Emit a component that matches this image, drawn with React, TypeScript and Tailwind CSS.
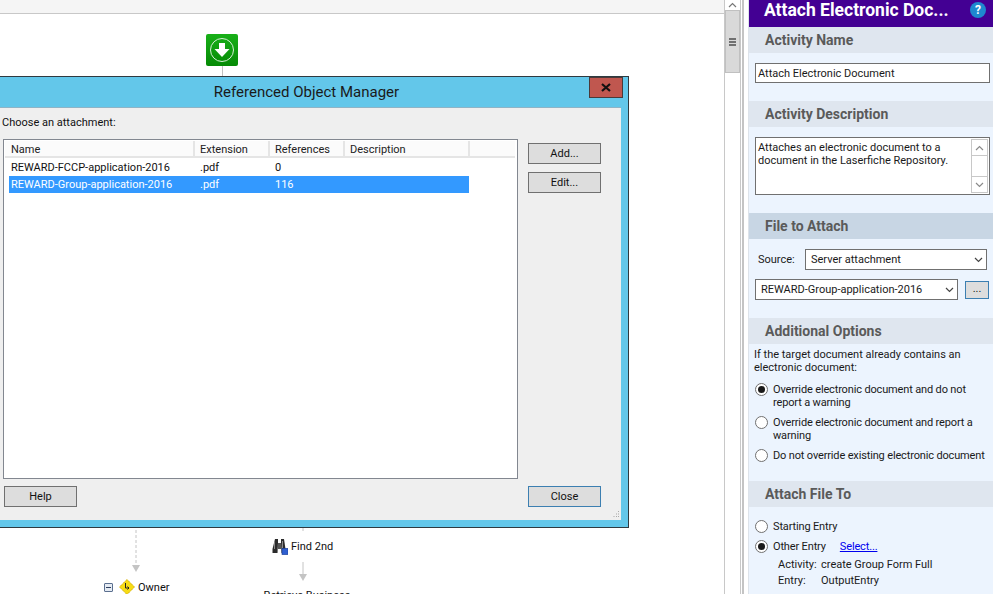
const font = { fontFamily: 'Roboto, "Noto Sans", sans-serif' };

function Chevron({ up = false, className = "" }: { up?: boolean; className?: string }) {
  return (
    <svg width="9" height="6" viewBox="0 0 9 6" className={className}>
      <path d={up ? "M1 5 L4.5 1.5 L8 5" : "M1 1 L4.5 4.5 L8 1"} fill="none" stroke="currentColor" strokeWidth="1.2" />
    </svg>
  );
}

function Btn({ label, active = false, className = "" }: { label: string; active?: boolean; className?: string }) {
  return (
    <div className={`flex h-[21px] w-[73px] items-center justify-center border-[1px] bg-[#dddddd] pt-[2px] text-[11px] text-[#111] ${active ? "border-[#3c7fb1]" : "border-[#707070]"} ${className}`}>
      {label}
    </div>
  );
}

function ColHead({ label, w }: { label: string; w: string }) {
  return <div className={`flex h-full shrink-0 items-center border-r-2 border-[#e5e5e5] pl-[5px] pt-[3px] ${w}`}>{label}</div>;
}

function Row({ a, b, c, selected = false }: { a: string; b: string; c: string; selected?: boolean }) {
  return (
    <div className={`flex h-[17px] w-[460px] items-center pl-[2px] pt-[1px] ${selected ? "bg-[#3399ff] text-white" : "text-[#111]"}`}>
      <span className="w-[189px] shrink-0">{a}</span>
      <span className="w-[75px] shrink-0">{b}</span>
      <span>{c}</span>
    </div>
  );
}

function Dialog() {
  return (
    <div className="absolute left-[-17px] top-[76px] flex h-[452px] w-[646px] flex-col border border-[#2f3a40] bg-[#63c7ea] pb-[7px] pl-[8px] pr-[7px]">
      <div className="flex h-[30px] shrink-0 items-center justify-center text-[15px] text-[#1a1a1a]">Referenced Object Manager</div>
      <div className="absolute right-[5px] top-0 flex h-[21px] w-[34px] items-center justify-center border border-[#4a3a3a] bg-[#c0574f]">
        <svg width="10" height="9" viewBox="0 0 10 9"><path d="M1 1 L9 8 M9 1 L1 8" stroke="#111" strokeWidth="2.2" /></svg>
      </div>
      <div className="flex min-h-0 flex-1 flex-col border-t border-[#8fb4c6] bg-[#efefef] pl-[10px] pr-[20px] text-[11px]">
        <div className="mt-[7px] h-[16px] leading-[16px] text-[#111]">Choose an attachment:</div>
        <div className="mt-[8px] flex min-h-0 flex-1 gap-[10px]">
          <div className="ml-[1px] w-[515px] shrink-0 border border-[#828790] bg-white p-[1px]">
            <div className="mb-[1px] flex h-[17px] w-[510px] items-start border-b-2 border-[#e5e5e5] bg-[#fbfbfb] text-[#222]">
              <ColHead label="Name" w="w-[190px] pl-[6px]" />
              <ColHead label="Extension" w="w-[75px]" />
              <ColHead label="References" w="w-[75px]" />
              <ColHead label="Description" w="w-[125px]" />
            </div>
            <div className="ml-[4px]">
              <Row a="REWARD-FCCP-application-2016" b=".pdf" c="0" />
              <Row a="REWARD-Group-application-2016" b=".pdf" c="116" selected />
            </div>
          </div>
          <div className="flex flex-col gap-[8px] pt-[4px]">
            <Btn label="Add..." />
            <Btn label="Edit..." />
          </div>
        </div>
        <div className="flex h-[41px] shrink-0 items-center justify-between pb-[6px] pl-[2px]">
          <Btn label="Help" />
          <Btn label="Close" active />
        </div>
      </div>
      <svg className="absolute bottom-[8px] right-[8px]" width="9" height="9" viewBox="0 0 9 9">
        <path d="M7 1h1v1H7zM5 3.500h1v1H5zM7 3.500h1v1H7zM2.500 6h1v1h-1zM5 6h1v1H5zM7 6h1v1H7z" fill="#a8a8a8" />
      </svg>
    </div>
  );
}

function Canvas() {
  return (
    <div className="relative min-w-0 flex-1 bg-white text-[11px] text-[#111]">
      <div className="h-[14px] border-b border-[#c8c8c8] bg-[#f5f5f5]" />
      <div className="absolute left-[206px] top-[34px] flex h-[32px] w-[32px] items-center justify-center rounded-[2px] bg-gradient-to-b from-[#18b018] to-[#058a05]">
        <svg width="26" height="26" viewBox="0 0 26 26">
          <circle cx="13" cy="13" r="11.500" fill="none" stroke="#d6efd6" strokeWidth="1" />
          <path d="M10 6h6v6h4.500L13 20 5.500 12H10z" fill="#fff" />
        </svg>
      </div>
      <div className="absolute left-[222px] top-[66px] h-[10px] w-px bg-[#c0c0c0]" />
      <Dialog />
      <svg className="absolute left-[130px] top-[528px]" width="12" height="45" viewBox="0 0 12 45">
        <path d="M6 2V38" stroke="#c4c4c4" strokeDasharray="3 2" />
        <path d="M2 37h8l-4 7z" fill="#c4c4c4" />
      </svg>
      <svg className="absolute left-[297px] top-[528px]" width="12" height="54" viewBox="0 0 12 54">
        <path d="M6 0V3M6 34V48" stroke="#c4c4c4" />
        <path d="M2 46h8l-4 7z" fill="#c4c4c4" />
      </svg>
      <div className="absolute left-[272px] top-[537px] flex items-center gap-[3px]">
        <svg width="16" height="17" viewBox="0 0 16 17">
          <path d="M3 1h3v4l-.5 10H0.500V11z" fill="#2b2b2b" />
          <path d="M9 1h3l1.500 10v4H9.500L9 5z" fill="#2b2b2b" />
          <rect x="6" y="5" width="3" height="6" fill="#555" />
          <rect x="2" y="3" width="1" height="8" fill="#8a8a8a" />
          <rect x="10" y="3" width="1" height="7" fill="#8a8a8a" />
          <rect x="10" y="10.500" width="6" height="6" fill="#2f5fd0" stroke="#1a3f9a" strokeWidth="0.7" />
        </svg>
        <span className="pt-[2px]">Find 2nd</span>
      </div>
      <div className="absolute left-[104px] top-[579px] flex items-center">
        <div className="flex h-[9px] w-[9px] items-center justify-center rounded-[1px] border border-[#5b6f8f] bg-[#e5ebf3]">
          <div className="h-px w-[5px] bg-[#2f3f5f]" />
        </div>
        <svg className="ml-[6px]" width="16" height="16" viewBox="0 0 16 16">
          <path d="M8 0.500l7.500 7.500-7.500 7.500L0.500 8z" fill="#f7dc14" stroke="#d0a800" strokeDasharray="1.500 0.700" />
          <path d="M6.500 4v5h3M8.500 7.500L10 9l-1.500 1.500" fill="none" stroke="#222" strokeWidth="1" />
        </svg>
        <span className="ml-[3px] pt-[1px] leading-[14px]">Owner</span>
      </div>
      <div className="absolute left-[258px] top-[589px] leading-[14px]">· Retrieve Business</div>
    </div>
  );
}

function Scrollbar() {
  return (
    <div className="flex w-[24px] shrink-0 bg-white">
      <div className="flex w-[17px] flex-col items-center border-x border-[#c8c8c8] bg-white">
        <div className="flex h-[10px] w-full items-center justify-center text-[#777]"><Chevron up /></div>
        <div className="flex h-[63px] w-full items-center justify-center border border-[#c0c0c0] bg-[#d9d9d9]">
          <div className="flex flex-col gap-[1px]">
            <div className="h-[2px] w-[7px] bg-[#707070]" />
            <div className="h-[2px] w-[7px] bg-[#707070]" />
            <div className="h-[2px] w-[7px] bg-[#707070]" />
          </div>
        </div>
      </div>
      <div className="ml-[1px] w-[2px] bg-[#c4c4c4]" />
    </div>
  );
}

function SectionHead({ label, active = false }: { label: string; active?: boolean }) {
  return (
    <div className={`flex h-[26px] shrink-0 items-center pl-[16px] pt-[1px] text-[14px] font-bold text-[#5a5a5a] ${active ? "bg-[#c8d6e4]" : "bg-[#dfe6ef]"}`}>
      {label}
    </div>
  );
}

function Radio({ on = false }: { on?: boolean }) {
  return (
    <div className="flex h-[13px] w-[13px] shrink-0 items-center justify-center rounded-full border border-[#707070] bg-white">
      {on && <div className="h-[7px] w-[7px] rounded-full bg-[#1a1a1a]" />}
    </div>
  );
}

function RadioRow({ on = false, children, className = "" }: { on?: boolean; children: React.ReactNode; className?: string }) {
  return (
    <div className={`flex items-start gap-[5px] whitespace-nowrap pl-[6px] leading-[13px] tracking-[-0.15px] ${className}`}>
      <Radio on={on} />
      <div>{children}</div>
    </div>
  );
}

function Select({ label, className = "" }: { label: string; className?: string }) {
  return (
    <div className={`flex h-[21px] items-center justify-between whitespace-nowrap border border-[#707070] bg-white pl-[5px] pr-[3px] ${className}`}>
      <span>{label}</span>
      <Chevron className="text-[#444]" />
    </div>
  );
}

function Panel() {
  return (
    <div className="flex w-[245px] shrink-0 flex-col overflow-hidden border-l border-[#dde3ea] bg-[#ecf4fe] text-[11px] leading-[13px] text-[#1a1a1a]">
      <div className="flex h-[27px] shrink-0 items-start justify-between bg-[#430093] pl-[15px] pr-[7px]">
        <span className="text-[17.5px] leading-[20px] font-bold text-white">Attach Electronic Doc...</span>
        <div className="mt-[2px] flex h-[16px] w-[16px] items-center justify-center rounded-full bg-[#1e88cf] text-[12px] font-bold text-white">?</div>
      </div>
      <SectionHead label="Activity Name" />
      <div className="h-[48px] shrink-0 pl-[6px] pr-[3px] pt-[10px]">
        <div className="flex h-[20px] items-center border border-[#707070] bg-white pl-[2px]">Attach Electronic Document</div>
      </div>
      <SectionHead label="Activity Description" />
      <div className="h-[86px] shrink-0 pl-[6px] pr-[3px] pt-[10px]">
        <div className="flex h-[58px] justify-between border border-[#707070] bg-white">
          <div className="whitespace-nowrap pl-[2px] pt-[3px]">Attaches an electronic document to a<br />document in the Laserfiche Repository.</div>
          <div className="m-[1px] flex w-[17px] flex-col items-center justify-between border border-[#c8c8c8] bg-white text-[#8a8a8a]">
            <div className="flex h-[16px] w-full items-center justify-center border-b border-[#c8c8c8]"><Chevron up /></div>
            <div className="flex h-[16px] w-full items-center justify-center border-t border-[#c8c8c8]"><Chevron /></div>
          </div>
        </div>
      </div>
      <SectionHead label="File to Attach" active />
      <div className="h-[79px] shrink-0 pl-[6px] pr-[3px] pt-[10px]">
        <div className="flex items-center">
          <span className="ml-[3px] w-[47px]">Source:</span>
          <Select label="Server attachment" className="w-[182px]" />
        </div>
        <div className="mt-[9px] flex items-center gap-[7px]">
          <Select label="REWARD-Group-application-2016" className="w-[203px]" />
          <div className="flex h-[18px] w-[24px] items-center justify-center border border-[#3c7fb1] bg-[#dddddd] pb-[3px]">...</div>
        </div>
      </div>
      <SectionHead label="Additional Options" />
      <div className="h-[137px] shrink-0 pt-[4px]">
        <div className="whitespace-nowrap pl-[5px] leading-[13px]">If the target document already contains an<br />electronic document:</div>
        <RadioRow on className="mt-[9px]">Override electronic document and do not<br />report a warning</RadioRow>
        <RadioRow className="mt-[7px]">Override electronic document and report a<br />warning</RadioRow>
        <RadioRow className="mt-[7px]">Do not override existing electronic document</RadioRow>
      </div>
      <SectionHead label="Attach File To" />
      <div className="pt-[13px]">
        <RadioRow>Starting Entry</RadioRow>
        <RadioRow on className="mt-[7px]">
          <span>Other Entry</span><span className="ml-[14px] text-[#0000ee] underline">Select...</span>
        </RadioRow>
        <div className="mt-[5px] flex pl-[29px]"><span className="w-[43px]">Activity:</span><span>create Group Form Full</span></div>
        <div className="mt-[3px] flex pl-[29px]"><span className="w-[43px]">Entry:</span><span>OutputEntry</span></div>
      </div>
    </div>
  );
}

export default function App() {
  return (
    <div className="flex h-[594px] w-[993px] overflow-hidden bg-white" style={font}>
      <Canvas />
      <Scrollbar />
      <Panel />
    </div>
  );
}
